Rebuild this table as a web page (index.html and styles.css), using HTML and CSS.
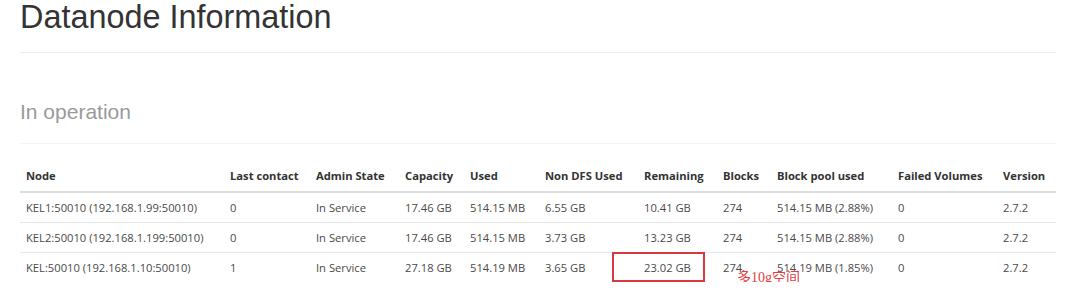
FILE: index.html
```html
<!DOCTYPE html>
<html>
<head>
<meta charset="utf-8">
<link rel="stylesheet" href="styles.css">
</head>
<body>
<div class="page">
  <h1 class="page-title">Datanode Information</h1>
  <h2 class="section-title">In operation</h2>
  <div class="table-wrap">
    <table class="dn-table">
      <colgroup>
        <col class="c-node"><col class="c-last"><col class="c-admin"><col class="c-cap"><col class="c-used"><col class="c-nondfs"><col class="c-rem"><col class="c-blocks"><col class="c-bpu"><col class="c-failed"><col class="c-ver">
      </colgroup>
      <thead>
        <tr>
          <th>Node</th><th>Last contact</th><th>Admin State</th><th>Capacity</th><th>Used</th><th>Non DFS Used</th><th>Remaining</th><th>Blocks</th><th>Block pool used</th><th>Failed Volumes</th><th>Version</th>
        </tr>
      </thead>
      <tbody>
        <tr>
          <td>KEL1:50010 (192.168.1.99:50010)</td><td>0</td><td>In Service</td><td>17.46 GB</td><td>514.15 MB</td><td>6.55 GB</td><td>10.41 GB</td><td>274</td><td>514.15 MB (2.88%)</td><td>0</td><td>2.7.2</td>
        </tr>
        <tr>
          <td>KEL2:50010 (192.168.1.199:50010)</td><td>0</td><td>In Service</td><td>17.46 GB</td><td>514.15 MB</td><td>3.73 GB</td><td>13.23 GB</td><td>274</td><td>514.15 MB (2.88%)</td><td>0</td><td>2.7.2</td>
        </tr>
        <tr>
          <td>KEL:50010 (192.168.1.10:50010)</td><td>1</td><td>In Service</td><td>27.18 GB</td><td>514.19 MB</td><td>3.65 GB</td><td>23.02 GB</td><td>274</td><td>514.19 MB (1.85%)</td><td>0</td><td>2.7.2</td>
        </tr>
      </tbody>
    </table>
    <div class="mark-box"></div>
    <div class="mark-note">多10g空间</div>
  </div>
</div>
</body>
</html>
```
FILE: styles.css
```css
html, body {
  margin: 0;
  padding: 0;
  background: #ffffff;
}
.page {
  padding: 0 24px 0 20px;
  font-family: "Liberation Sans", Arial, sans-serif;
  color: #333;
}
.page-title {
  margin: 0;
  font-size: 32.4px;
  line-height: 35px;
  font-weight: 400;
  color: #333;
  padding-bottom: 17px;
  border-bottom: 1px solid #eeeeee;
}
.section-title {
  margin: 47px 0 0 0;
  font-size: 21px;
  line-height: 23px;
  font-weight: 400;
  color: #9a9a9a;
  padding-bottom: 20px;
  border-bottom: 1px solid #f4f4f4;
}
.table-wrap {
  position: relative;
  margin-top: 17px;
}
.dn-table {
  width: 100%;
  table-layout: fixed;
  border-collapse: collapse;
  border-spacing: 0;
  font-family: "Open Sans", "Noto Sans", sans-serif;
  font-size: 11.2px;
}
.c-node { width: 204px; }
.c-last { width: 86px; }
.c-admin { width: 89px; }
.c-cap { width: 65px; }
.c-used { width: 75px; }
.c-nondfs { width: 99px; }
.c-rem { width: 79px; }
.c-blocks { width: 54px; }
.c-bpu { width: 121px; }
.c-failed { width: 105px; }
.c-ver { width: 59px; }
.dn-table th {
  text-align: left;
  font-weight: 700;
  color: #333;
  padding: 5px 6px;
  line-height: 20px;
  border-bottom: 2px solid #dddddd;
  white-space: nowrap;
}
.dn-table td {
  padding: 5px 6px;
  line-height: 19px;
  color: #4a4a4a;
  border-top: 1px solid #e6e6e6;
  white-space: nowrap;
}
.mark-box {
  position: absolute;
  left: 592px;
  top: 91px;
  width: 89px;
  height: 26px;
  border: 2px solid #d8393f;
}
.mark-note {
  position: absolute;
  left: 717px;
  top: 109px;
  font-family: "Liberation Serif", "Noto Sans CJK SC", serif;
  font-size: 14px;
  line-height: 16px;
  color: #e0413f;
}
```
